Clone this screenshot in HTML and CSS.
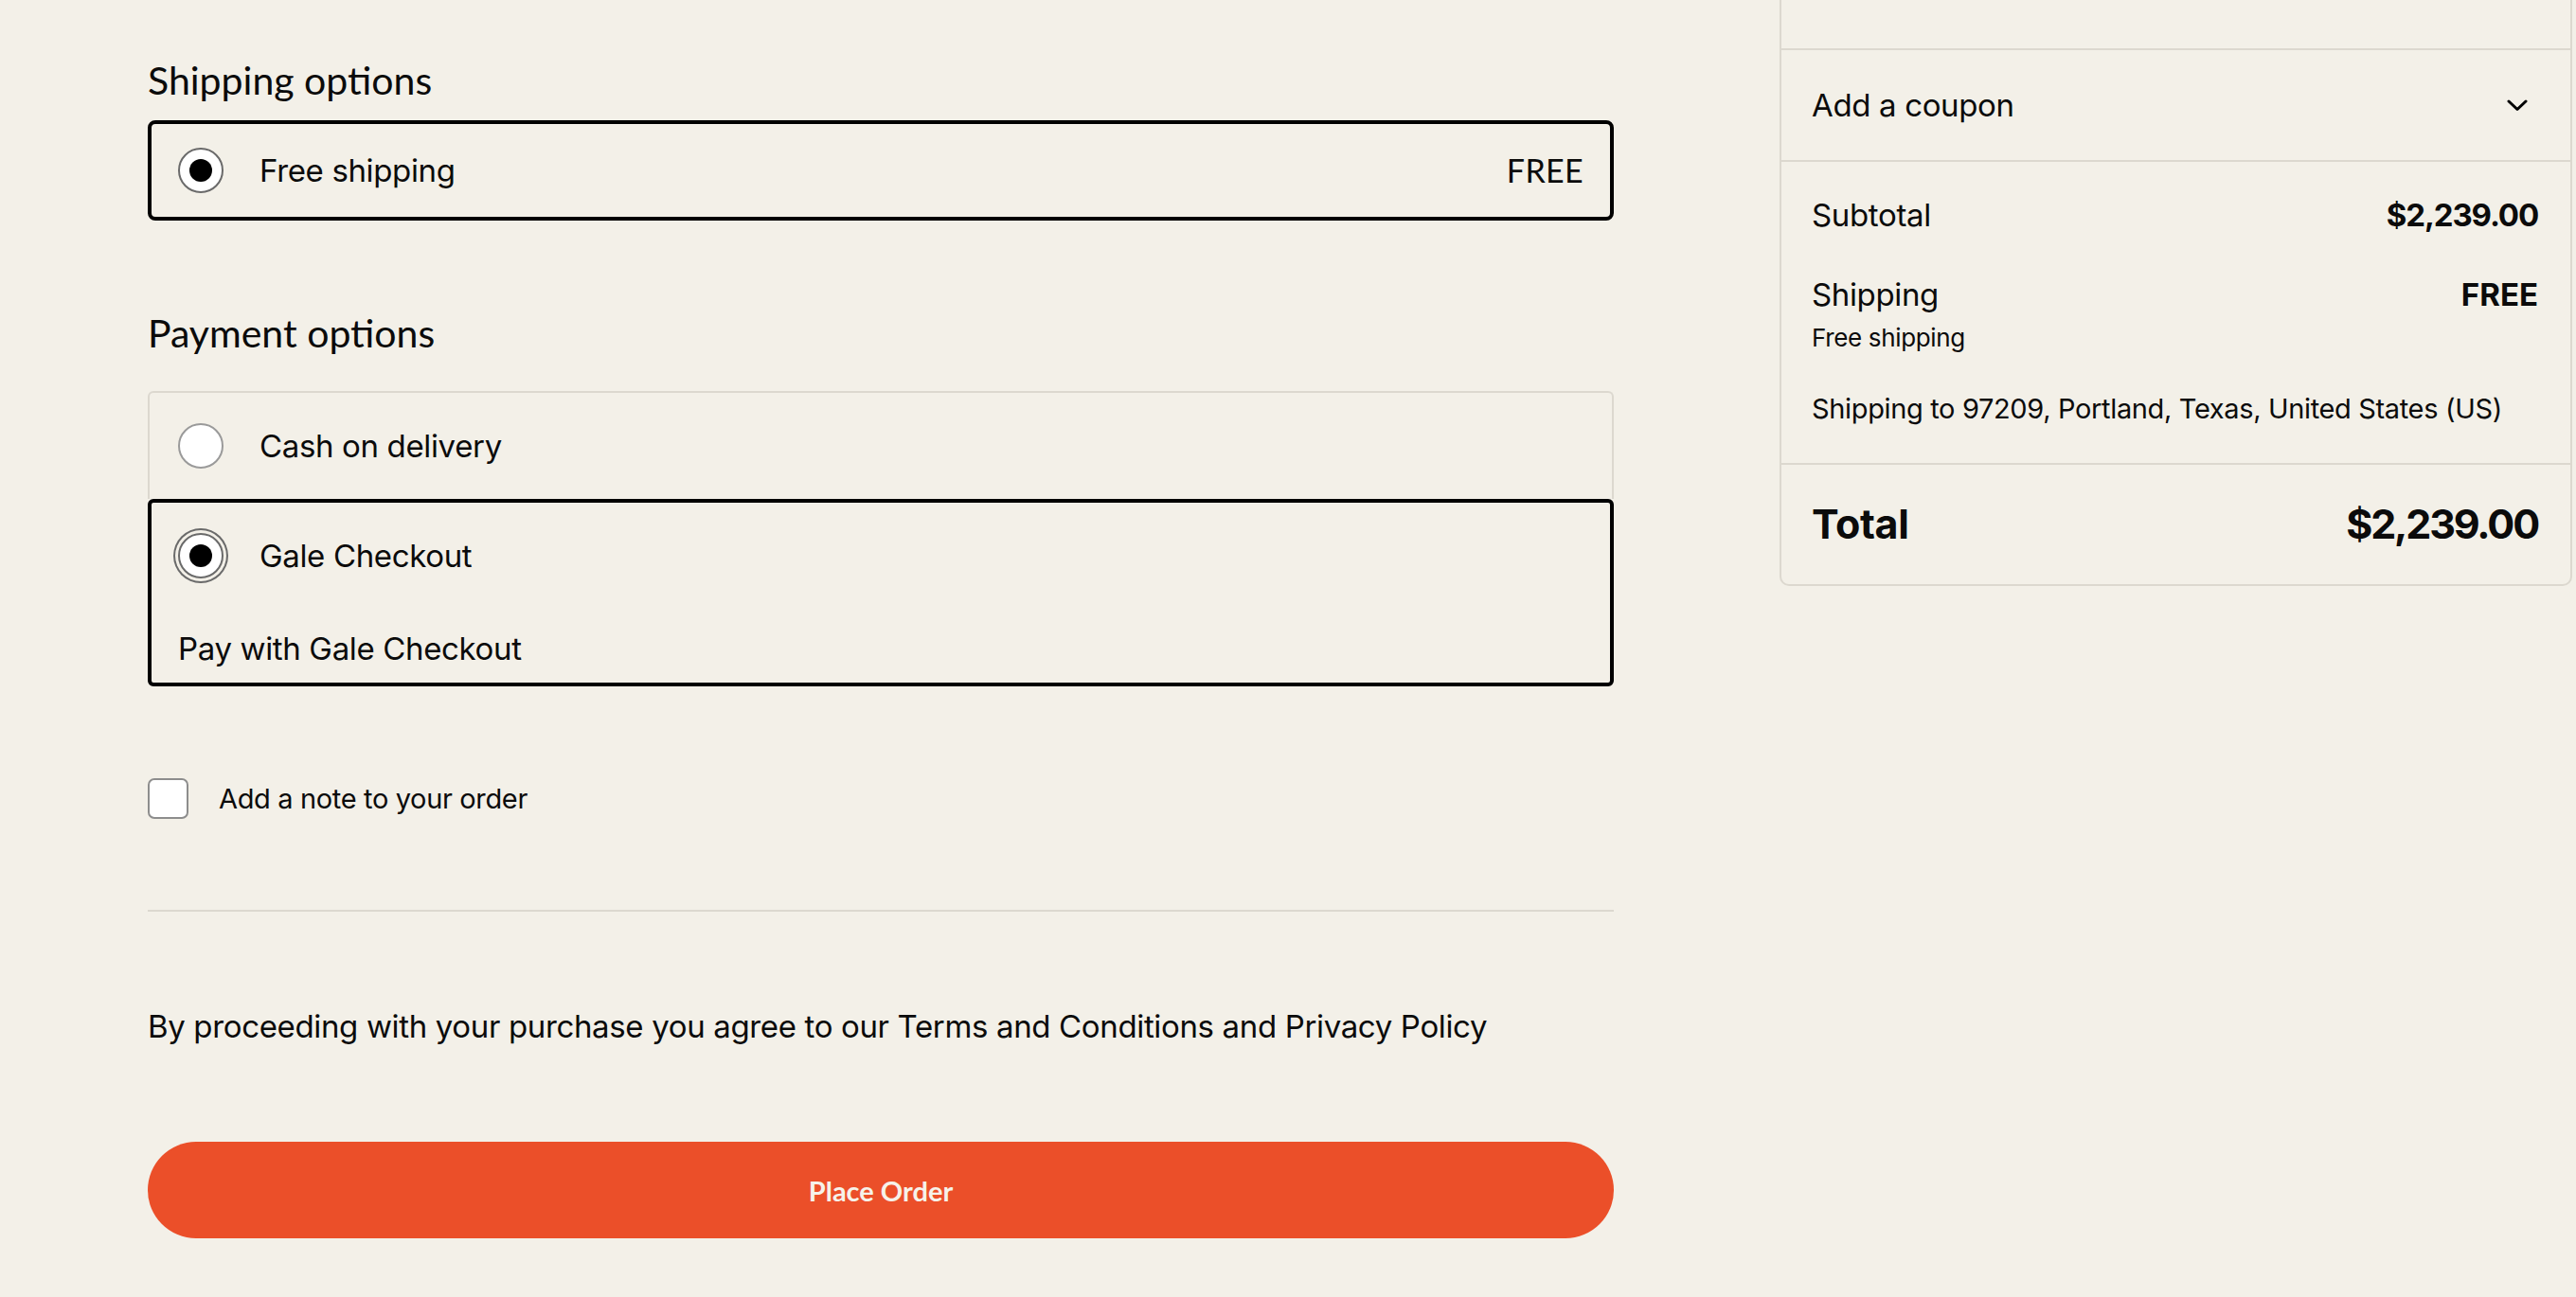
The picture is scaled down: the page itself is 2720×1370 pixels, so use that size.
FILE: index.html
```html
<!DOCTYPE html>
<html lang="en">
<head>
<meta charset="utf-8">
<title>Checkout</title>
<link rel="stylesheet" href="styles.css">
</head>
<body>
<div class="page">
  <main class="main">
    <h2 class="section-title">Shipping options</h2>
    <div class="option">
      <span class="radio checked"></span>
      <span class="option-label">Free shipping</span>
      <span class="option-price">FREE</span>
    </div>

    <h2 class="section-title payment">Payment options</h2>
    <div class="pay-list">
      <div class="pay-item">
        <div class="pay-row">
          <span class="radio"></span>
          <span class="option-label">Cash on delivery</span>
        </div>
      </div>
      <div class="pay-item selected">
        <div class="pay-row">
          <span class="radio checked focus"></span>
          <span class="option-label">Gale Checkout</span>
        </div>
        <p class="pay-desc">Pay with Gale Checkout</p>
      </div>
    </div>

    <label class="note-row">
      <span class="checkbox"></span>
      <span class="note-label">Add a note to your order</span>
    </label>

    <div class="divider"></div>

    <p class="terms">By proceeding with your purchase you agree to our Terms and Conditions and Privacy Policy</p>

    <button class="place-order">Place Order</button>
  </main>

  <aside class="aside">
    <div class="summary">
      <div class="sum-top"></div>
      <div class="coupon">
        <span>Add a coupon</span>
        <svg class="chevron" width="22" height="13" viewBox="0 0 22 13" aria-hidden="true"><path d="M2 2 L11 10.5 L20 2" fill="none" stroke="#000" stroke-width="3" stroke-linecap="round" stroke-linejoin="round"/></svg>
      </div>
      <div class="totals">
        <div class="line"><span>Subtotal</span><span class="amt">$2,239.00</span></div>
        <div class="line ship"><span>Shipping</span><span class="amt free">FREE</span></div>
        <div class="sub-note">Free shipping</div>
        <div class="ship-to">Shipping to 97209, Portland, Texas, United States (US)</div>
      </div>
      <div class="total-sec">
        <span>Total</span><span class="total-amt">$2,239.00</span>
      </div>
    </div>
  </aside>
</div>
</body>
</html>
```

FILE: styles.css
```css
* { box-sizing: border-box; }

html, body {
  margin: 0;
  background: #f3f0e8;
}

body {
  font-family: Inter, "Liberation Sans", sans-serif;
  letter-spacing: -0.022em;
  color: #0b0b0b;
  overflow: hidden;
}

.page {
  display: flex;
  align-items: flex-start;
  gap: 175px;
  padding-left: 156px;
}

.main {
  width: 1548px;
  flex: none;
  padding-top: 59px;
}

.section-title {
  font-family: Lato, "DejaVu Sans", sans-serif;
  font-weight: 400;
  font-size: 41px;
  line-height: 52px;
  letter-spacing: 0;
  margin: 0 0 16px;
}

.section-title.payment {
  margin: 93px 0 35px;
}

.option {
  display: flex;
  align-items: center;
  border: 4px solid #000;
  border-radius: 8px;
  padding: 25px 28px;
}

.option-label {
  margin-left: 38px;
  font-size: 33px;
  line-height: 48px;
}

.option-price {
  margin-left: auto;
  font-family: Lato, "DejaVu Sans", sans-serif;
  font-size: 34px;
  line-height: 48px;
  letter-spacing: 0.01em;
}

.radio {
  flex: none;
  width: 48px;
  height: 48px;
  border-radius: 50%;
  border: 2px solid #9a9a9a;
  background: #fff;
  display: flex;
  align-items: center;
  justify-content: center;
}

.radio.checked {
  border-color: #6a6a6a;
}

.radio.checked::after {
  content: "";
  width: 24px;
  height: 24px;
  border-radius: 50%;
  background: #000;
}

.radio.focus {
  box-shadow: 0 0 0 3px #f3f0e8, 0 0 0 5px #6a6a6a;
}

.pay-item {
  border: 2px solid #dcd8cf;
  border-bottom: none;
  border-radius: 6px 6px 0 0;
  padding: 32px 30px;
}

.pay-item.selected {
  border: 4px solid #000;
  border-radius: 6px;
  padding: 32px 28px 12px;
}

.pay-row {
  display: flex;
  align-items: center;
}

.pay-desc {
  margin: 50px 0 0;
  font-size: 33px;
  line-height: 48px;
}

.note-row {
  display: flex;
  align-items: center;
  margin-top: 97px;
}

.checkbox {
  flex: none;
  width: 43px;
  height: 43px;
  border: 2px solid #8d8d8d;
  border-radius: 7px;
  background: #fff;
}

.note-label {
  margin-left: 32px;
  font-size: 29px;
  line-height: 43px;
}

.divider {
  margin-top: 96px;
  height: 2px;
  background: #dcd8cf;
}

.terms {
  margin: 97px 0 0;
  font-size: 33px;
  line-height: 48px;
}

.place-order {
  display: flex;
  align-items: center;
  justify-content: center;
  width: 100%;
  height: 102px;
  margin-top: 98px;
  border: none;
  border-radius: 51px;
  background: #eb4f29;
  color: #f6f2ea;
  font-family: Lato, "DejaVu Sans", sans-serif;
  font-weight: 700;
  font-size: 29px;
  letter-spacing: 0;
}

.aside {
  width: 837px;
  flex: none;
  margin-top: -61px;
}

.summary {
  border: 2px solid #dcd8cf;
  border-radius: 0 0 10px 10px;
}

.sum-top {
  height: 112px;
  border-bottom: 2px solid #dcd8cf;
}

.coupon {
  display: flex;
  align-items: center;
  justify-content: space-between;
  padding: 34px 34px 34px 32px;
  font-size: 33px;
  line-height: 48px;
  border-bottom: 2px solid #dcd8cf;
}

.chevron {
  margin-right: 11px;
}

.totals {
  padding: 32px 34px 35px 32px;
  border-bottom: 2px solid #dcd8cf;
}

.line {
  display: flex;
  justify-content: space-between;
  font-size: 33px;
  line-height: 48px;
}

.line.ship {
  margin-top: 36px;
}

.amt {
  font-weight: 700;
  letter-spacing: -0.035em;
}

.amt.free {
  letter-spacing: 0;
}

.sub-note {
  margin-top: 4px;
  font-size: 26px;
  line-height: 36px;
}

.ship-to {
  margin-top: 35px;
  font-size: 29px;
  line-height: 44px;
  white-space: nowrap;
}

.total-sec {
  display: flex;
  justify-content: space-between;
  padding: 34px 34px 36px 32px;
  font-size: 43px;
  line-height: 56px;
  font-weight: 700;
}

.total-amt {
  letter-spacing: -0.05em;
}
```
